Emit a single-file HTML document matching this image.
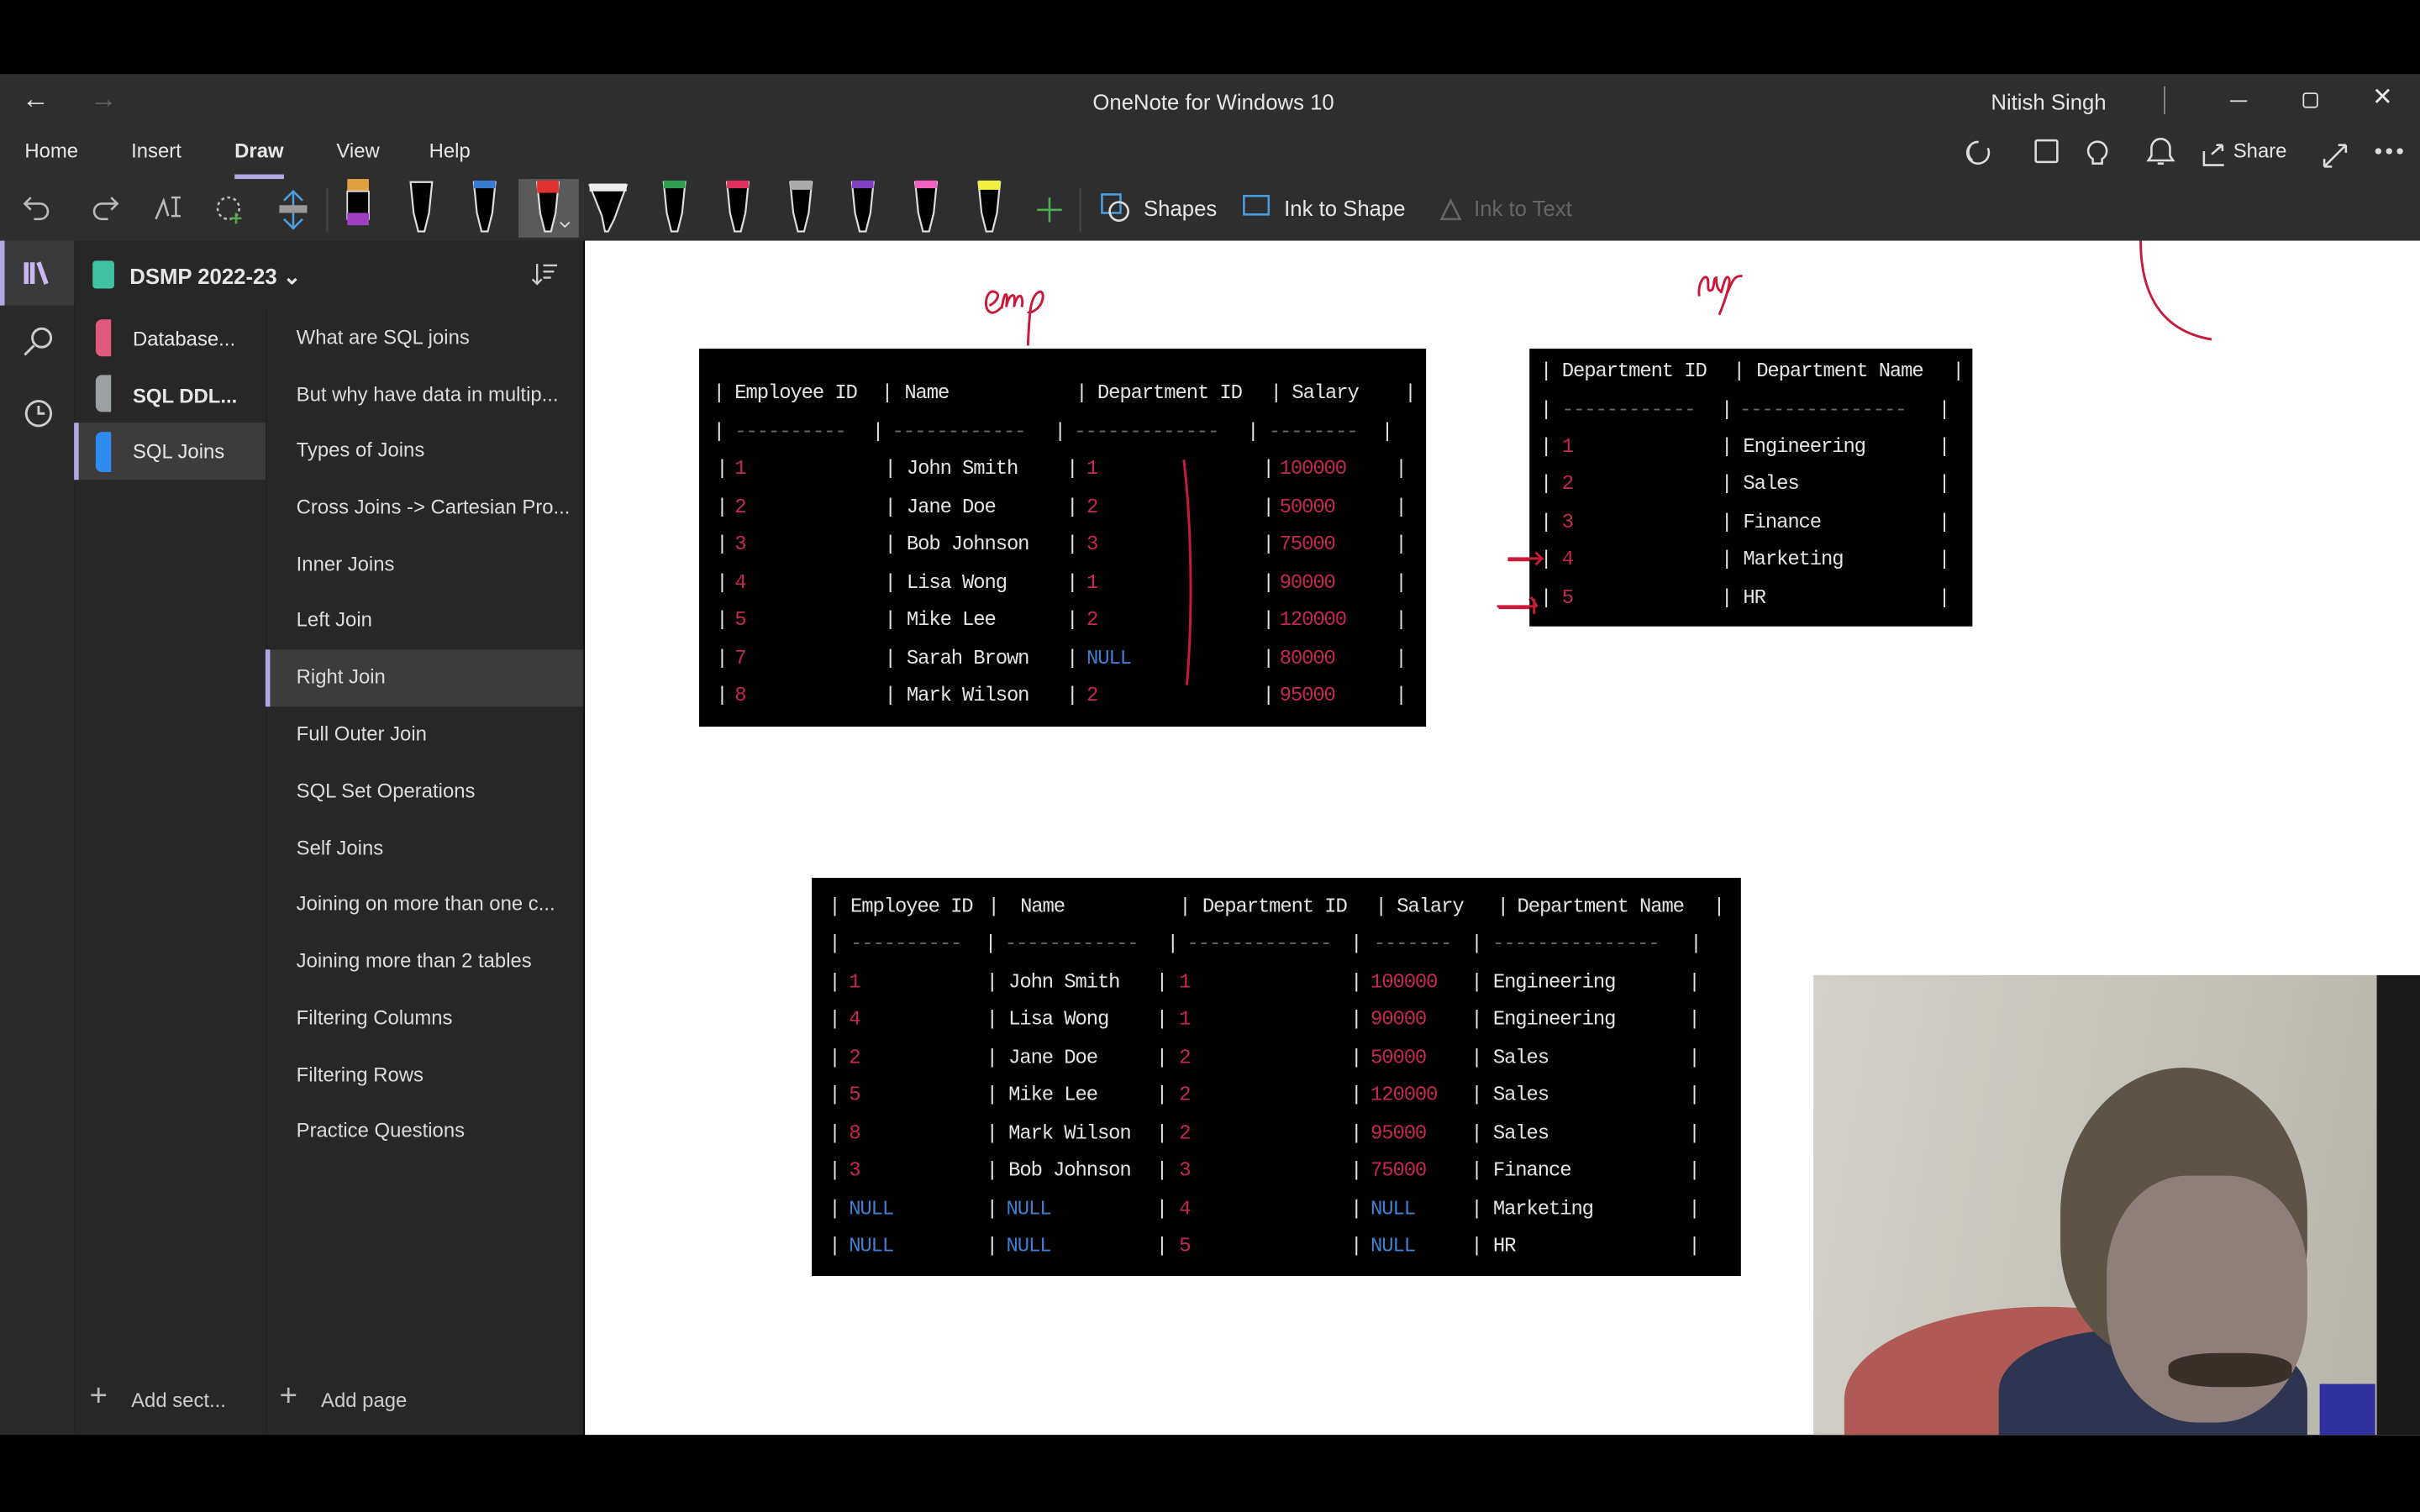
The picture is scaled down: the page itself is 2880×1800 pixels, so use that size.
<!DOCTYPE html>
<html><head><meta charset="utf-8"><style>
*{margin:0;padding:0;box-sizing:border-box}
html,body{width:2880px;height:1800px;overflow:hidden;background:#000}
#w{position:absolute;left:0;top:0;width:1568px;height:980px;transform:scale(1.83673);transform-origin:0 0;font-family:"Liberation Sans",sans-serif;background:#000}
.a{position:absolute}
.t{position:absolute;white-space:nowrap;line-height:16px}
.ui{color:#e6e6e6;font-size:13px}
.m{font-family:"Liberation Mono",monospace;font-size:13px;letter-spacing:-0.6px;color:#e4e4e4;position:absolute;white-space:pre;line-height:16px}
.r{color:#c4284e}.b{color:#3f7fd0}.g{color:#666}
.pg{position:absolute;left:192px;color:#dcdcdc;font-size:13px;line-height:16px;white-space:nowrap}
</style></head><body><div id="w">
<div class="a" style="left:0;top:48px;width:1568px;height:108px;background:#2e2e2e"></div>
<div class="t ui" style="left:14px;top:56px;font-size:18px">←</div>
<div class="t ui" style="left:58px;top:56px;font-size:18px;color:#666">→</div>
<div class="t ui" style="left:708px;top:58px;font-size:14px">OneNote for Windows 10</div>
<div class="t ui" style="left:1290px;top:58px;font-size:14px">Nitish Singh</div>
<div class="a" style="left:1402px;top:56px;width:1px;height:18px;background:#888"></div>
<div class="a" style="left:1445px;top:65px;width:11px;height:1px;background:#ddd"></div>
<div class="a" style="left:1492px;top:60px;width:10px;height:10px;border:1px solid #ddd;border-radius:2px"></div>
<div class="t ui" style="left:1537px;top:56px;font-size:16px">✕</div>
<div class="t ui" style="left:16px;top:90px">Home</div>
<div class="t ui" style="left:85px;top:90px">Insert</div>
<div class="t ui" style="left:152px;top:90px;font-weight:bold">Draw</div>
<div class="a" style="left:152px;top:113px;width:32px;height:3px;background:#b4a7e6"></div>
<div class="t ui" style="left:218px;top:90px">View</div>
<div class="t ui" style="left:278px;top:90px">Help</div>
<svg class="a" style="left:1270px;top:86px" width="298" height="26" fill="none" stroke="#ddd" stroke-width="1.4">
<path d="M12 6a7 7 0 1 0 6 4M8 18a7 7 0 0 1-1-10"/><rect x="49" y="5" width="14" height="14" rx="1"/><path d="M92 20v-3a6 6 0 1 0-6 0v3h6z"/><path d="M122 18h16l-2-3v-5a6 6 0 0 0-12 0v5zM128 20h4"/>
<path d="M158 12v9h13M163 14l7-6m0 0h-4m4 0v4"/><path d="M236 22l14-14m0 0h-5m5 0v5M236 22h5m-5 0v-5"/>
<circle cx="271" cy="12" r="1.3" fill="#ddd"/><circle cx="278" cy="12" r="1.3" fill="#ddd"/><circle cx="285" cy="12" r="1.3" fill="#ddd"/></svg>
<div class="t ui" style="left:1447px;top:90px">Share</div>
<svg class="a" style="left:0;top:116px" width="720" height="40" fill="none" stroke="#bbb" stroke-width="1.4">
<path d="M20 12l-4 4 4 4M16 16h10a5 5 0 0 1 0 10h-4"/><path d="M72 12l4 4-4 4M76 16H66a5 5 0 0 0 0 10h4"/>
<path d="M101 26l5-12 3 10M111 12h6m-3 0v12m-3 0h6"/><circle cx="148" cy="19" r="7" stroke-dasharray="2 2"/><path d="M153 22v7m-3.5-3.5h7" stroke="#5a5"/>
<path d="M190 8v24M184 14l6-6 6 6M184 26l6 6 6-6" stroke="#4a9ee0"/><rect x="181" y="17" width="18" height="5" fill="#999" stroke="none"/>
<line x1="212" y1="6" x2="212" y2="34" stroke="#444"/>
<rect x="336" y="0" width="39" height="38" fill="#5a5a5a" stroke="none"/>
<line x1="700" y1="6" x2="700" y2="34" stroke="#444"/>
<path d="M680 12v16M672 20h16" stroke="#4caf50"/>
</svg>
<svg class="a" style="left:220px;top:116px" width="440" height="40">
<g transform="translate(12,0)"><rect x="-7" y="0" width="14" height="8" fill="#e0a040"/><rect x="-7" y="8" width="14" height="18" fill="#000" stroke="#ddd"/><rect x="-7" y="22" width="14" height="8" fill="#a040c0"/></g>
<g fill="#000" stroke="#ddd" stroke-width="1.2">
<path d="M46 2h14l-2 20-3 12h-4l-3-12z"/><path d="M87 2h14l-2 20-3 12h-4l-3-12z"/><path d="M128 2h14l-2 20-3 12h-4l-3-12z"/>
<path d="M162 4h24l-8 22-4 8h-2l-2-10z"/><path d="M210 2h14l-2 20-3 12h-4l-3-12z"/><path d="M251 2h14l-2 20-3 12h-4l-3-12z"/><path d="M292 2h14l-2 20-3 12h-4l-3-12z"/><path d="M332 2h14l-2 20-3 12h-4l-3-12z"/><path d="M373 2h14l-2 20-3 12h-4l-3-12z"/><path d="M414 2h14l-2 20-3 12h-4l-3-12z"/></g>
<rect x="87" y="1" width="14" height="5" fill="#3a7ad0"/><rect x="128" y="1" width="14" height="8" fill="#e03030"/><rect x="162" y="3" width="24" height="5" fill="#eee"/><rect x="210" y="1" width="14" height="5" fill="#30a050"/><rect x="251" y="1" width="14" height="5" fill="#e03060"/><rect x="292" y="1" width="14" height="6" fill="#aaa"/><rect x="332" y="1" width="14" height="5" fill="#8040c0"/><rect x="373" y="1" width="14" height="5" fill="#f060c0"/><rect x="414" y="1" width="14" height="6" fill="#f0f040"/>
<path d="M143 28l3 3 3-3" stroke="#ddd" fill="none"/></svg>
<svg class="a" style="left:712px;top:124px" width="300" height="22" fill="none" stroke-width="1.4"><rect x="2" y="2" width="12" height="12" stroke="#4a9ee0"/><circle cx="13" cy="13" r="6" stroke="#ddd"/><rect x="94" y="3" width="16" height="12" stroke="#4a9ee0"/><path d="M222 18l6-12 6 12z" stroke="#666"/></svg>
<div class="t ui" style="left:741px;top:127px;font-size:14px">Shapes</div>
<div class="t ui" style="left:832px;top:127px;font-size:14px">Ink to Shape</div>
<div class="t ui" style="left:955px;top:127px;font-size:14px;color:#666">Ink to Text</div>
<div class="a" style="left:0;top:156px;width:48px;height:774px;background:#2a2a2a"></div>
<div class="a" style="left:0;top:156px;width:48px;height:42px;background:#3a3a3a"></div>
<div class="a" style="left:0;top:156px;width:3px;height:42px;background:#b4a7e6"></div>
<svg class="a" style="left:10px;top:166px" width="30" height="120" fill="none" stroke="#ccc" stroke-width="1.6"><path d="M7 4v14M11 4v14M15 4l5 14" stroke="#c9b8f0" stroke-width="3"/><circle cx="17" cy="53" r="6"/><path d="M12 58l-6 6"/><circle cx="15" cy="102" r="8"/><path d="M15 97v5h4"/></svg>
<div class="a" style="left:48px;top:156px;width:330px;height:774px;background:#272727"></div>
<div class="a" style="left:60px;top:169px;width:14px;height:18px;background:#3fc1a2;border-radius:2px"></div>
<div class="t ui" style="left:84px;top:171px;font-weight:bold;font-size:14px">DSMP 2022-23 ⌄</div>
<svg class="a" style="left:344px;top:170px" width="18" height="16" fill="none" stroke="#ccc" stroke-width="1.3"><path d="M4 1v13M1 11l3 3 3-3M8 2h9M8 6h7M8 10h5"/></svg>
<div class="a" style="left:172px;top:201px;width:1px;height:729px;background:#222"></div>
<div class="a" style="left:62px;top:207px;width:10px;height:24px;background:#e05a80;border-radius:4px 0 0 4px"></div>
<div class="t ui" style="left:86px;top:212px">Database...</div>
<div class="a" style="left:62px;top:243px;width:10px;height:24px;background:#9aa0a4;border-radius:4px 0 0 4px"></div>
<div class="t ui" style="left:86px;top:249px;font-weight:bold">SQL DDL...</div>
<div class="a" style="left:48px;top:274px;width:124px;height:37px;background:#3c3c3c"></div>
<div class="a" style="left:48px;top:274px;width:3px;height:37px;background:#b4a7e6"></div>
<div class="a" style="left:62px;top:280px;width:10px;height:26px;background:#2f8cef;border-radius:4px 0 0 4px"></div>
<div class="t ui" style="left:86px;top:285px">SQL Joins</div>
<div class="a" style="left:172px;top:421px;width:206px;height:37px;background:#3c3c3c"></div>
<div class="a" style="left:172px;top:421px;width:3px;height:37px;background:#b4a7e6"></div>
<div class="pg" style="top:211px">What are SQL joins</div>
<div class="pg" style="top:248px">But why have data in multip...</div>
<div class="pg" style="top:284px">Types of Joins</div>
<div class="pg" style="top:321px">Cross Joins -&gt; Cartesian Pro...</div>
<div class="pg" style="top:358px">Inner Joins</div>
<div class="pg" style="top:394px">Left Join</div>
<div class="pg" style="top:431px">Right Join</div>
<div class="pg" style="top:468px">Full Outer Join</div>
<div class="pg" style="top:505px">SQL Set Operations</div>
<div class="pg" style="top:542px">Self Joins</div>
<div class="pg" style="top:578px">Joining on more than one c...</div>
<div class="pg" style="top:615px">Joining more than 2 tables</div>
<div class="pg" style="top:652px">Filtering Columns</div>
<div class="pg" style="top:689px">Filtering Rows</div>
<div class="pg" style="top:725px">Practice Questions</div>
<div class="t ui" style="left:58px;top:897px;font-size:20px;color:#bbb">+</div>
<div class="t ui" style="left:85px;top:900px;color:#ccc">Add sect...</div>
<div class="t ui" style="left:181px;top:897px;font-size:20px;color:#bbb">+</div>
<div class="t ui" style="left:208px;top:900px;color:#ccc">Add page</div>
<div class="a" style="left:379px;top:156px;width:1189px;height:774px;background:#fff"></div>
<svg class="a" style="left:379px;top:156px" width="1189" height="330" fill="none" stroke="#c81a3a" stroke-width="1.6">
<path d="M262 42c5-2 8-8 3-9s-7 10-3 13c3 2 6-1 8-3M270 44c1-6 2-10 3-9s0 8 0 8c1-6 4-9 5-7s0 7 0 7c1-6 4-9 5-6s0 6 0 6M287 68c1-18 1-30 6-34s5 6 0 10-6 2-6 2"/>
<path d="M722 36c-1-8 3-14 5-12s-1 10 3 8c2-1 1-8 3-8 0 6 2 10 4 8M736 34c2-6 3-12 5-10s-2 14-6 24M740 34c3-6 4-12 10-11"/>
<path d="M1008 0c0 30 10 58 46 64"/>
<path d="M598 207h22l-4-4M620 207l-5 4M592 238h24M616 238l-4-6M614 244v-10"/></svg>
<svg class="a" style="left:769px;top:444px" width="12" height="18"><path d="M1 1v14l4-4 3 6 2-1-3-6h5z" fill="#fff" stroke="#000"/></svg>
<!-- table 1 -->
<div class="a" style="left:453px;top:226px;width:471px;height:245px;background:#000"></div>
<div class="m" style="left:462px;top:247px">|</div><div class="m" style="left:476px;top:247px">Employee ID</div><div class="m" style="left:571px;top:247px">|</div><div class="m" style="left:586px;top:247px">Name</div><div class="m" style="left:697px;top:247px">|</div><div class="m" style="left:711px;top:247px">Department ID</div><div class="m" style="left:823px;top:247px">|</div><div class="m" style="left:837px;top:247px">Salary</div><div class="m" style="left:910px;top:247px">|</div>
<div class="m" style="left:462px;top:272px">|</div><div class="m g" style="left:476px;top:272px">----------</div><div class="m" style="left:565px;top:272px">|</div><div class="m g" style="left:578px;top:272px">------------</div><div class="m" style="left:683px;top:272px">|</div><div class="m g" style="left:696px;top:272px">-------------</div><div class="m" style="left:808px;top:272px">|</div><div class="m g" style="left:822px;top:272px">--------</div><div class="m" style="left:895px;top:272px">|</div>
<div class="m" style="left:464px;top:296px">|</div><div class="m r" style="left:476px;top:296px">1</div><div class="m" style="left:573px;top:296px">| John Smith</div><div class="m" style="left:691px;top:296px">|</div><div class="m r" style="left:704px;top:296px">1</div><div class="m" style="left:818px;top:296px">|</div><div class="m r" style="left:829px;top:296px">100000</div><div class="m" style="left:904px;top:296px">|</div>
<div class="m" style="left:464px;top:321px">|</div><div class="m r" style="left:476px;top:321px">2</div><div class="m" style="left:573px;top:321px">| Jane Doe</div><div class="m" style="left:691px;top:321px">|</div><div class="m r" style="left:704px;top:321px">2</div><div class="m" style="left:818px;top:321px">|</div><div class="m r" style="left:829px;top:321px">50000</div><div class="m" style="left:904px;top:321px">|</div>
<div class="m" style="left:464px;top:345px">|</div><div class="m r" style="left:476px;top:345px">3</div><div class="m" style="left:573px;top:345px">| Bob Johnson</div><div class="m" style="left:691px;top:345px">|</div><div class="m r" style="left:704px;top:345px">3</div><div class="m" style="left:818px;top:345px">|</div><div class="m r" style="left:829px;top:345px">75000</div><div class="m" style="left:904px;top:345px">|</div>
<div class="m" style="left:464px;top:370px">|</div><div class="m r" style="left:476px;top:370px">4</div><div class="m" style="left:573px;top:370px">| Lisa Wong</div><div class="m" style="left:691px;top:370px">|</div><div class="m r" style="left:704px;top:370px">1</div><div class="m" style="left:818px;top:370px">|</div><div class="m r" style="left:829px;top:370px">90000</div><div class="m" style="left:904px;top:370px">|</div>
<div class="m" style="left:464px;top:394px">|</div><div class="m r" style="left:476px;top:394px">5</div><div class="m" style="left:573px;top:394px">| Mike Lee</div><div class="m" style="left:691px;top:394px">|</div><div class="m r" style="left:704px;top:394px">2</div><div class="m" style="left:818px;top:394px">|</div><div class="m r" style="left:829px;top:394px">120000</div><div class="m" style="left:904px;top:394px">|</div>
<div class="m" style="left:464px;top:419px">|</div><div class="m r" style="left:476px;top:419px">7</div><div class="m" style="left:573px;top:419px">| Sarah Brown</div><div class="m" style="left:691px;top:419px">|</div><div class="m b" style="left:704px;top:419px">NULL</div><div class="m" style="left:818px;top:419px">|</div><div class="m r" style="left:829px;top:419px">80000</div><div class="m" style="left:904px;top:419px">|</div>
<div class="m" style="left:464px;top:443px">|</div><div class="m r" style="left:476px;top:443px">8</div><div class="m" style="left:573px;top:443px">| Mark Wilson</div><div class="m" style="left:691px;top:443px">|</div><div class="m r" style="left:704px;top:443px">2</div><div class="m" style="left:818px;top:443px">|</div><div class="m r" style="left:829px;top:443px">95000</div><div class="m" style="left:904px;top:443px">|</div>
<svg class="a" style="left:760px;top:296px" width="20" height="150" fill="none" stroke="#c81a3a" stroke-width="1.6"><path d="M7 2c5 40 6 100 2 146"/></svg>
<!-- table 2 -->
<div class="a" style="left:991px;top:226px;width:287px;height:180px;background:#000"></div>
<div class="m" style="left:998px;top:233px">|</div><div class="m" style="left:1012px;top:233px">Department ID</div><div class="m" style="left:1123px;top:233px">|</div><div class="m" style="left:1138px;top:233px">Department Name</div><div class="m" style="left:1265px;top:233px">|</div>
<div class="m" style="left:998px;top:258px">|</div><div class="m g" style="left:1012px;top:258px">------------</div><div class="m" style="left:1115px;top:258px">|</div><div class="m g" style="left:1127px;top:258px">---------------</div><div class="m" style="left:1256px;top:258px">|</div>
<div class="m" style="left:998px;top:282px">|</div><div class="m r" style="left:1012px;top:282px">1</div><div class="m" style="left:1115px;top:282px">| Engineering</div><div class="m" style="left:1256px;top:282px">|</div>
<div class="m" style="left:998px;top:306px">|</div><div class="m r" style="left:1012px;top:306px">2</div><div class="m" style="left:1115px;top:306px">| Sales</div><div class="m" style="left:1256px;top:306px">|</div>
<div class="m" style="left:998px;top:331px">|</div><div class="m r" style="left:1012px;top:331px">3</div><div class="m" style="left:1115px;top:331px">| Finance</div><div class="m" style="left:1256px;top:331px">|</div>
<div class="m" style="left:998px;top:355px">|</div><div class="m r" style="left:1012px;top:355px">4</div><div class="m" style="left:1115px;top:355px">| Marketing</div><div class="m" style="left:1256px;top:355px">|</div>
<div class="m" style="left:998px;top:380px">|</div><div class="m r" style="left:1012px;top:380px">5</div><div class="m" style="left:1115px;top:380px">| HR</div><div class="m" style="left:1256px;top:380px">|</div>
<svg class="a" style="left:965px;top:350px" width="45" height="50" fill="none" stroke="#c81a3a" stroke-width="1.6"><path d="M12 12h22l-4-4M34 12l-4 4M5 43h26M31 43l-4-6M29 48v-10"/></svg>
<!-- table 3 -->
<div class="a" style="left:526px;top:569px;width:602px;height:258px;background:#000"></div>
<div class="m" style="left:537px;top:580px">|</div><div class="m" style="left:551px;top:580px">Employee ID</div><div class="m" style="left:640px;top:580px">|</div><div class="m" style="left:661px;top:580px">Name</div><div class="m" style="left:764px;top:580px">|</div><div class="m" style="left:779px;top:580px">Department ID</div><div class="m" style="left:891px;top:580px">|</div><div class="m" style="left:905px;top:580px">Salary</div><div class="m" style="left:970px;top:580px">|</div><div class="m" style="left:983px;top:580px">Department Name</div><div class="m" style="left:1110px;top:580px">|</div>
<div class="m" style="left:537px;top:604px">|</div><div class="m g" style="left:551px;top:604px">----------</div><div class="m" style="left:638px;top:604px">|</div><div class="m g" style="left:651px;top:604px">------------</div><div class="m" style="left:756px;top:604px">|</div><div class="m g" style="left:769px;top:604px">-------------</div><div class="m" style="left:875px;top:604px">|</div><div class="m g" style="left:890px;top:604px">-------</div><div class="m" style="left:953px;top:604px">|</div><div class="m g" style="left:967px;top:604px">---------------</div><div class="m" style="left:1095px;top:604px">|</div>
<div class="m" style="left:537px;top:629px">|</div><div class="m r" style="left:550px;top:629px">1</div><div class="m" style="left:639px;top:629px">| John Smith</div><div class="m" style="left:749px;top:629px">|</div><div class="m r" style="left:764px;top:629px">1</div><div class="m" style="left:875px;top:629px">|</div><div class="m r" style="left:888px;top:629px">100000</div><div class="m" style="left:953px;top:629px">| Engineering</div><div class="m" style="left:1094px;top:629px">|</div>
<div class="m" style="left:537px;top:653px">|</div><div class="m r" style="left:550px;top:653px">4</div><div class="m" style="left:639px;top:653px">| Lisa Wong</div><div class="m" style="left:749px;top:653px">|</div><div class="m r" style="left:764px;top:653px">1</div><div class="m" style="left:875px;top:653px">|</div><div class="m r" style="left:888px;top:653px">90000</div><div class="m" style="left:953px;top:653px">| Engineering</div><div class="m" style="left:1094px;top:653px">|</div>
<div class="m" style="left:537px;top:678px">|</div><div class="m r" style="left:550px;top:678px">2</div><div class="m" style="left:639px;top:678px">| Jane Doe</div><div class="m" style="left:749px;top:678px">|</div><div class="m r" style="left:764px;top:678px">2</div><div class="m" style="left:875px;top:678px">|</div><div class="m r" style="left:888px;top:678px">50000</div><div class="m" style="left:953px;top:678px">| Sales</div><div class="m" style="left:1094px;top:678px">|</div>
<div class="m" style="left:537px;top:702px">|</div><div class="m r" style="left:550px;top:702px">5</div><div class="m" style="left:639px;top:702px">| Mike Lee</div><div class="m" style="left:749px;top:702px">|</div><div class="m r" style="left:764px;top:702px">2</div><div class="m" style="left:875px;top:702px">|</div><div class="m r" style="left:888px;top:702px">120000</div><div class="m" style="left:953px;top:702px">| Sales</div><div class="m" style="left:1094px;top:702px">|</div>
<div class="m" style="left:537px;top:727px">|</div><div class="m r" style="left:550px;top:727px">8</div><div class="m" style="left:639px;top:727px">| Mark Wilson</div><div class="m" style="left:749px;top:727px">|</div><div class="m r" style="left:764px;top:727px">2</div><div class="m" style="left:875px;top:727px">|</div><div class="m r" style="left:888px;top:727px">95000</div><div class="m" style="left:953px;top:727px">| Sales</div><div class="m" style="left:1094px;top:727px">|</div>
<div class="m" style="left:537px;top:751px">|</div><div class="m r" style="left:550px;top:751px">3</div><div class="m" style="left:639px;top:751px">| Bob Johnson</div><div class="m" style="left:749px;top:751px">|</div><div class="m r" style="left:764px;top:751px">3</div><div class="m" style="left:875px;top:751px">|</div><div class="m r" style="left:888px;top:751px">75000</div><div class="m" style="left:953px;top:751px">| Finance</div><div class="m" style="left:1094px;top:751px">|</div>
<div class="m" style="left:537px;top:776px">|</div><div class="m b" style="left:550px;top:776px">NULL</div><div class="m" style="left:639px;top:776px">|</div><div class="m b" style="left:652px;top:776px">NULL</div><div class="m" style="left:749px;top:776px">|</div><div class="m r" style="left:764px;top:776px">4</div><div class="m" style="left:875px;top:776px">|</div><div class="m b" style="left:888px;top:776px">NULL</div><div class="m" style="left:953px;top:776px">| Marketing</div><div class="m" style="left:1094px;top:776px">|</div>
<div class="m" style="left:537px;top:800px">|</div><div class="m b" style="left:550px;top:800px">NULL</div><div class="m" style="left:639px;top:800px">|</div><div class="m b" style="left:652px;top:800px">NULL</div><div class="m" style="left:749px;top:800px">|</div><div class="m r" style="left:764px;top:800px">5</div><div class="m" style="left:875px;top:800px">|</div><div class="m b" style="left:888px;top:800px">NULL</div><div class="m" style="left:953px;top:800px">| HR</div><div class="m" style="left:1094px;top:800px">|</div>
<!-- webcam -->
<div class="a" style="left:1175px;top:632px;width:393px;height:298px;background:linear-gradient(100deg,#d2d0c9 0%,#c3c0b6 60%,#b9b7ad 90%);overflow:hidden">
<div class="a" style="left:365px;top:0;width:30px;height:298px;background:#1a1a1a"></div>
<div class="a" style="left:20px;top:215px;width:260px;height:120px;background:#b05a55;border-radius:50% 50% 0 0"></div>
<div class="a" style="left:120px;top:230px;width:200px;height:100px;background:#2f3550;border-radius:40% 40% 0 0"></div>
<div class="a" style="left:160px;top:60px;width:160px;height:190px;background:#5e5347;border-radius:50% 50% 40% 40%"></div>
<div class="a" style="left:190px;top:130px;width:130px;height:160px;background:#8e7f7a;border-radius:40% 40% 45% 45%"></div>
<div class="a" style="left:230px;top:245px;width:80px;height:22px;background:#3a302a;border-radius:40%"></div>
<div class="a" style="left:328px;top:265px;width:36px;height:33px;background:#3030a0"></div>
</div>
</div></body></html>
